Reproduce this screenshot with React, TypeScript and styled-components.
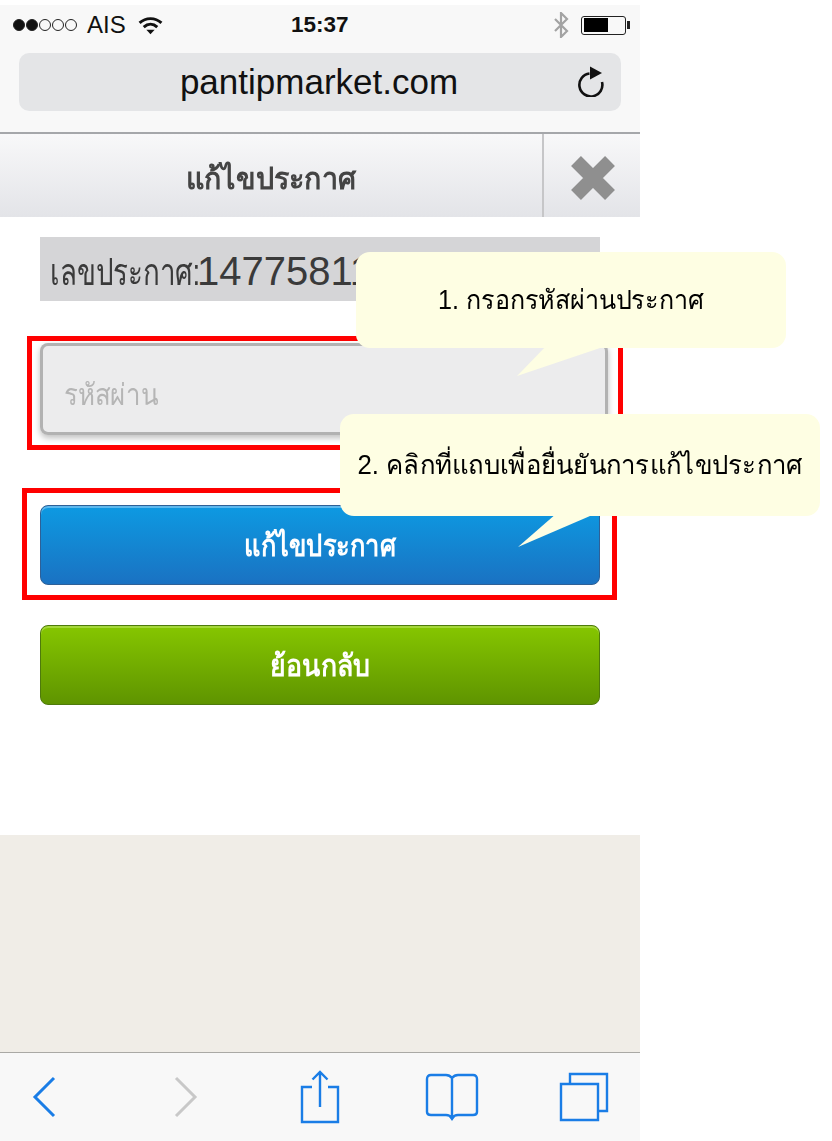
import React from 'react';
import styled, { createGlobalStyle } from 'styled-components';

const FONT = `"Liberation Sans", "Noto Sans", "DejaVu Sans", sans-serif`;

const GlobalStyle = createGlobalStyle`
  html, body {
    margin: 0;
    padding: 0;
    background: #fff;
    font-family: ${FONT};
  }
`;

function App(): React.ReactElement {
  return (
    <Page>
      <GlobalStyle />
      <StatusBar>
        <StatusLeft>
          <Signal>
            <Dot $on />
            <Dot $on />
            <Dot />
            <Dot />
            <Dot />
          </Signal>
          <Carrier>AIS</Carrier>
          <svg width="25" height="19" viewBox="0 0 24 18">
            <path d="M1.5 6.500C7.500 1 16.500 1 22.500 6.500" fill="none" stroke="#111" strokeWidth="2.8" />
            <path d="M5.500 10.500C9.500 6.800 14.500 6.800 18.500 10.500" fill="none" stroke="#111" strokeWidth="2.800" />
            <path d="M8 13h8l-4 4.500z" fill="#111" />
          </svg>
        </StatusLeft>
        <Clock>15:37</Clock>
        <StatusRight>
          <svg width="16" height="26" viewBox="0 0 16 26">
            <path d="M2 7l12 12-6 6V1l6 6L2 19" fill="none" stroke="#a3a3a3" strokeWidth="2.200" />
          </svg>
          <Battery>
            <BatteryFill />
          </Battery>
          <BatteryTip />
        </StatusRight>
      </StatusBar>
      <AddressArea>
        <AddressBar>
          <Url>pantipmarket.com</Url>
          <ReloadIcon width="28" height="32" viewBox="0 0 28 32">
            <path d="M12.500 8.500A11.500 11.500 0 1 0 25 17" fill="none" stroke="#111" strokeWidth="2.600" />
            <path d="M13 1.500l12 6.500-12 6.500z" fill="#111" />
          </ReloadIcon>
        </AddressBar>
      </AddressArea>
      <TitleBar>
        <TitleText>
          <Squeeze $sx={0.955}>แก้ไขประกาศ</Squeeze>
        </TitleText>
        <CloseCell>
          <CloseIcon width="50" height="50" viewBox="0 0 50 50">
            <path d="M8 8L42 42M42 8L8 42" stroke="#8f8f8f" strokeWidth="14" />
          </CloseIcon>
        </CloseCell>
      </TitleBar>
      <Form>
        <AdNumber>
          <AdLabel>เลขประกาศ:</AdLabel>
          <AdDigits>14775811</AdDigits>
        </AdNumber>
        <InputFrame>
          <PasswordField>
            <PasswordInput aria-label="รหัสผ่าน" />
            <Hint>รหัสผ่าน</Hint>
          </PasswordField>
        </InputFrame>
        <ButtonFrame>
          <ActionButton $tone="blue">
            <Squeeze $sx={0.85}>แก้ไขประกาศ</Squeeze>
          </ActionButton>
        </ButtonFrame>
        <BackRow>
          <ActionButton $tone="green">
            <Squeeze $sx={0.89}>ย้อนกลับ</Squeeze>
          </ActionButton>
        </BackRow>
      </Form>
      <Beige />
      <Toolbar>
        <ToolIcon width="26" height="42" viewBox="0 0 26 42">
          <path d="M23 2L4 21l19 19" fill="none" stroke="#1a7de6" strokeWidth="3" />
        </ToolIcon>
        <ToolIcon width="26" height="42" viewBox="0 0 26 42" $gap={116}>
          <path d="M3 2l19 19L3 40" fill="none" stroke="#c8c8c8" strokeWidth="3" />
        </ToolIcon>
        <ToolIcon width="40" height="54" viewBox="0 0 40 54" $gap={101}>
          <path d="M12 17H2v35h36V17H28" fill="none" stroke="#1a7de6" strokeWidth="2.400" />
          <path d="M20 37V2M12.500 9.500L20 2l7.500 7.500" fill="none" stroke="#1a7de6" strokeWidth="2.400" />
        </ToolIcon>
        <ToolIcon width="54" height="48" viewBox="0 0 54 48" $gap={85}>
          <path d="M27 5C25 2.500 23 2 21 2H6Q2 2 2 6v33q0 3 4 3h15q4 0 6 3 2-3 6-3h15q4 0 4-3V6q0-4-4-4H33c-2 0-4 .5-6 3zM27 5v38" fill="none" stroke="#1a7de6" strokeWidth="2.400" />
          <path d="M23.500 43h7L27 48z" fill="#1a7de6" />
        </ToolIcon>
        <ToolIcon width="52" height="50" viewBox="0 0 52 50" $gap={80}>
          <path d="M11 12V2h37v37H39" fill="none" stroke="#1a7de6" strokeWidth="2.400" />
          <path d="M2 12h37v36H2z" fill="none" stroke="#1a7de6" strokeWidth="2.400" />
        </ToolIcon>
      </Toolbar>

      <Callout $left={356} $top={252} $width={430} $height={96}>
        <CalloutText>
          <Squeeze $sx={0.93}>1. กรอกรหัสผ่านประกาศ</Squeeze>
        </CalloutText>
        <CalloutTail width="100" height="40" viewBox="0 0 100 40" $left={160} $top={92}>
          <path d="M32 0L1 32 90 2z" fill="#fefee3" />
        </CalloutTail>
      </Callout>
      <Callout $left={340} $top={414} $width={480} $height={102}>
        <CalloutText>
          <Squeeze $sx={0.955}>2. คลิกที่แถบเพื่อยื่นยันการแก้ไขประกาศ</Squeeze>
        </CalloutText>
        <CalloutTail width="100" height="40" viewBox="0 0 100 40" $left={177} $top={99}>
          <path d="M40 0L1 34 80 0z" fill="#fefee3" />
        </CalloutTail>
      </Callout>
    </Page>
  );
}

export default App;

const Page = styled.div`
  position: relative;
  width: 832px;
  height: 1141px;
  overflow: hidden;
  background: #fff;
  padding-top: 5px;
  box-sizing: border-box;
`;

const Squeeze = styled.span<{ $sx: number }>`
  display: inline-block;
  transform: scaleX(${(p) => p.$sx});
`;

const StatusBar = styled.div`
  display: flex;
  align-items: center;
  justify-content: space-between;
  position: relative;
  width: 640px;
  height: 40px;
  box-sizing: border-box;
  padding: 0 10px 0 13px;
  background: #f8f8f8;
`;

const StatusLeft = styled.div`
  display: flex;
  align-items: center;
`;

const Signal = styled.div`
  display: flex;
  gap: 1px;
`;

const Dot = styled.span<{ $on?: boolean }>`
  display: block;
  width: 12px;
  height: 12px;
  box-sizing: border-box;
  border-radius: 50%;
  border: 1px solid #222;
  background: ${(p) => (p.$on ? '#111' : 'transparent')};
`;

const Carrier = styled.span`
  font-size: 24px;
  color: #111;
  margin: 0 12px 0 10px;
`;

const Clock = styled.span`
  position: absolute;
  left: 291px;
  font-size: 22.5px;
  font-weight: 700;
  color: #111;
`;

const StatusRight = styled.div`
  display: flex;
  align-items: center;
`;

const Battery = styled.div`
  width: 45px;
  height: 19px;
  margin-left: 12px;
  box-sizing: border-box;
  border: 1.5px solid #222;
  border-radius: 3px;
  padding: 1.5px;
`;

const BatteryFill = styled.div`
  width: 24px;
  height: 100%;
  background: #000;
`;

const BatteryTip = styled.div`
  width: 3px;
  height: 8px;
  margin-left: 1px;
  background: #222;
`;

const AddressArea = styled.div`
  width: 640px;
  height: 89px;
  box-sizing: border-box;
  padding: 8px 19px 0;
  background: #f8f8f8;
  border-bottom: 2px solid #a5a7aa;
`;

const AddressBar = styled.div`
  position: relative;
  height: 58px;
  display: flex;
  align-items: center;
  justify-content: center;
  border-radius: 10px;
  background: #e4e5e7;
`;

const Url = styled.span`
  font-size: 35px;
  color: #111;
  margin-left: -2px;
`;

const ReloadIcon = styled.svg`
  position: absolute;
  right: 16px;
  top: 12px;
`;

const TitleBar = styled.div`
  display: flex;
  width: 640px;
  height: 83px;
  background: linear-gradient(#f8f8f9, #e3e4e8);
`;

const TitleText = styled.div`
  flex: 1;
  display: flex;
  align-items: center;
  justify-content: center;
  padding-top: 6px;
  font-size: 30px;
  font-weight: 700;
  color: #444;
`;

const CloseCell = styled.div`
  width: 96px;
  display: flex;
  align-items: center;
  justify-content: center;
  border-left: 2px solid #c6c6c8;
`;

const CloseIcon = styled.svg`
  margin: 4px 0 0 1px;
  filter: blur(0.7px);
`;

const Form = styled.div`
  display: flex;
  flex-direction: column;
  width: 640px;
  height: 618px;
  box-sizing: border-box;
  padding-top: 20px;
`;

const AdNumber = styled.div`
  display: flex;
  align-items: center;
  width: 560px;
  height: 64px;
  margin-left: 40px;
  box-sizing: border-box;
  padding: 4px 0 0 10px;
  background: #d5d5d7;
  color: #3a3a3a;
  white-space: nowrap;
  overflow: hidden;
`;

const AdLabel = styled.span`
  display: inline-block;
  flex: none;
  width: 147px;
  font-size: 37px;
  transform: scaleX(0.75);
  transform-origin: left center;
`;

const AdDigits = styled.span`
  font-size: 40px;
`;

const InputFrame = styled.div`
  width: 596px;
  height: 114px;
  margin: 35px 0 0 27px;
  box-sizing: border-box;
  border: 5px solid #f00;
  padding: 2px 10px 0 8px;
`;

const PasswordField = styled.div`
  position: relative;
`;

const PasswordInput = styled.input`
  display: block;
  width: 100%;
  height: 92px;
  box-sizing: border-box;
  border: 0;
  outline: 0;
  border-radius: 8px;
  background: #ececed;
  box-shadow: inset 0 0 0 3px #b2b2b2, 0 3px 6px rgba(0, 0, 0, 0.25);
`;

const Hint = styled.span`
  position: absolute;
  left: 24px;
  top: 28px;
  font-size: 30px;
  color: #b5b5b5;
  transform: scaleX(0.86);
  transform-origin: left center;
  pointer-events: none;
`;

const ButtonFrame = styled.div`
  width: 595px;
  height: 112px;
  margin: 38px 0 0 22px;
  box-sizing: border-box;
  border: 5px solid #f00;
  padding: 12px 12px 0 13px;
`;

const BackRow = styled.div`
  width: 560px;
  margin: 25px 0 0 40px;
`;

const ActionButton = styled.button<{ $tone: 'blue' | 'green' }>`
  display: block;
  width: 560px;
  height: 80px;
  padding: 0;
  box-sizing: border-box;
  border-radius: 8px;
  border: 1.5px solid ${(p) => (p.$tone === 'blue' ? '#2f6096' : '#4e7a0c')};
  background: ${(p) =>
    p.$tone === 'blue'
      ? 'linear-gradient(#0d9ae2, #1a72c2)'
      : 'linear-gradient(#86c600, #5f9400)'};
  box-shadow: inset 0 2px 0 ${(p) => (p.$tone === 'blue' ? '#5db8ee' : '#a5d73a')};
  color: #fff;
  font-family: ${FONT};
  font-size: 30px;
  font-weight: 700;
`;

const Beige = styled.div`
  width: 640px;
  height: 217px;
  background: #f0ede7;
`;

const Toolbar = styled.div`
  display: flex;
  align-items: center;
  width: 640px;
  height: 89px;
  box-sizing: border-box;
  padding-left: 31px;
  border-top: 1px solid #aaa9a5;
  background: #f8f8f8;
`;

const ToolIcon = styled.svg<{ $gap?: number }>`
  flex: none;
  margin-left: ${(p) => p.$gap ?? 0}px;
`;

const Callout = styled.div<{ $left: number; $top: number; $width: number; $height: number }>`
  position: absolute;
  left: ${(p) => p.$left}px;
  top: ${(p) => p.$top}px;
  width: ${(p) => p.$width}px;
  height: ${(p) => p.$height}px;
  display: flex;
  align-items: center;
  justify-content: center;
  border-radius: 14px;
  background: #fefee3;
`;

const CalloutText = styled.span`
  font-size: 27px;
  color: #000;
  white-space: nowrap;
  margin-top: -2px;
`;

const CalloutTail = styled.svg<{ $left: number; $top: number }>`
  position: absolute;
  left: ${(p) => p.$left}px;
  top: ${(p) => p.$top}px;
`;
